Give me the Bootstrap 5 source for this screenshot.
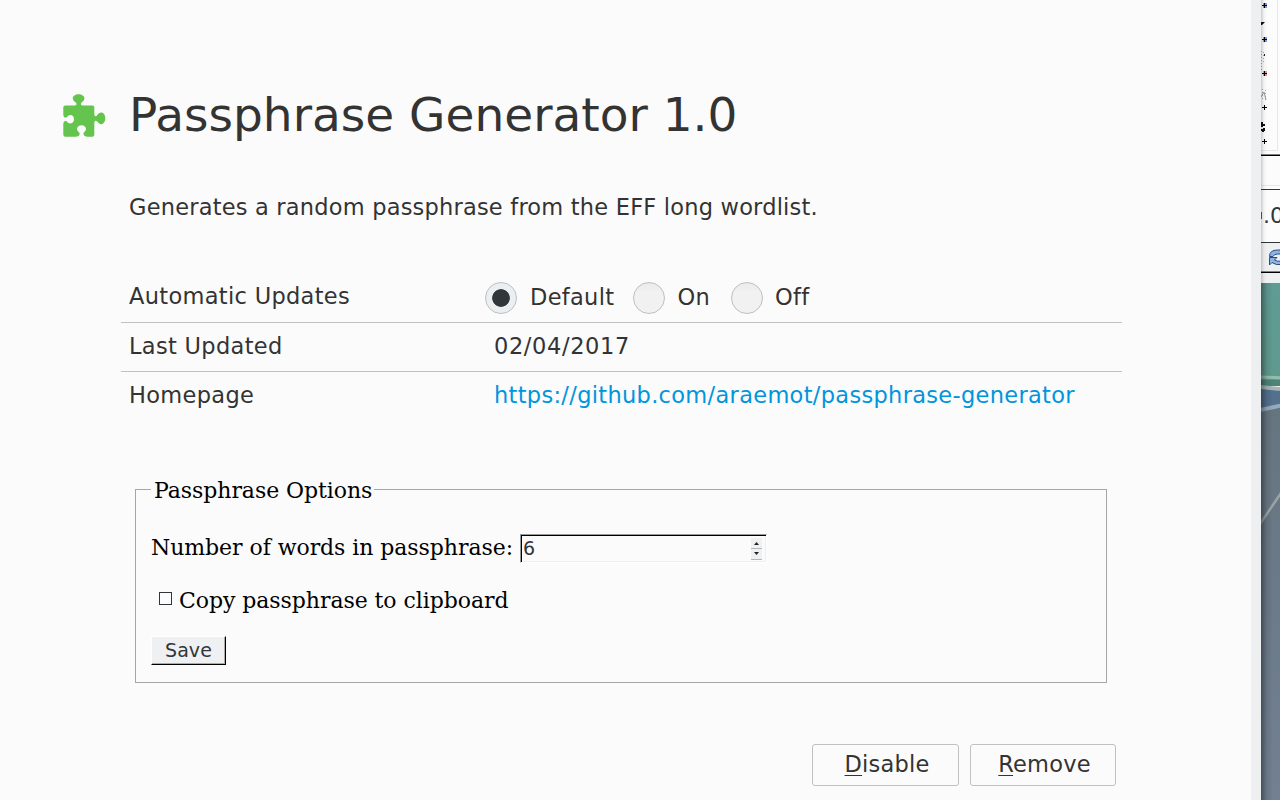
<!DOCTYPE html>
<html lang="en">
<head>
<meta charset="utf-8">
<meta name="viewport" content="width=device-width, initial-scale=1">
<title>Passphrase Generator</title>
<link rel="stylesheet" href="https://cdn.jsdelivr.net/npm/bootstrap@5.3.0/dist/css/bootstrap.min.css">
<style>
body{font-family:"DejaVu Sans",sans-serif;font-size:22.5px;line-height:28px;color:#333;background:#fbfbfb}
.pane{width:1251px;padding:86px 129px 0 63px}
.edge{width:10px;background:#edeff1}
.behind{width:19px}
.title{font-size:47px;line-height:56px;margin:1px 0 0 23px;font-weight:400;white-space:nowrap}
.about{margin:50px 0 0 66px;letter-spacing:.205px}
.details{margin:57px 0 0 58px;width:1001px;letter-spacing:.31px}
.line{border-bottom:1px solid #c1c1c1;padding-left:8px;height:49px}
.line:last-child{border-bottom:0}
.line-updates{height:45px;padding-bottom:4px}
.line-updates .key{width:356px;padding-bottom:5px}
.line-updates label span{padding-bottom:2px}
.line-date{padding-bottom:2px}
.line-home{padding-bottom:4px}
.key{width:365px;flex:none}
.date{letter-spacing:.62px}
.line a{color:#0095dd;text-decoration:none}
.pick{appearance:none;width:32px;height:32px;border:1px solid #bfbfbf;border-radius:50%;margin:0;background:linear-gradient(#ebebeb,#f1f1f1 30%)}
.pick:checked{background:radial-gradient(circle,#31363b 8.4px,#eceff1 9.2px)}
.options{font-family:"DejaVu Serif",serif;color:#000;font-size:22px;line-height:26px;margin:55px 0 0 72px;width:972px;letter-spacing:-.06px}
.options fieldset{border:1px solid #a6a6a6;height:207px;padding:0 15px;box-sizing:border-box}
.options legend{float:none;width:auto;font-size:22px;line-height:23px;padding:3px 2px 0 3px;margin:0}
.number{width:247px;height:29px;margin-left:7px;border:1px solid;border-color:#999 #fff #fff #999;background:#fbfbfb;box-shadow:inset 1px 1px #000,inset -1px -1px #eee;font:19px/27px "DejaVu Sans",sans-serif;color:#31363b;padding:0 4px 0 2px}
.steps{width:11px}
.steps span{height:11px;background:#eff0f1;border-bottom:1px solid #b5b5b5}
.tick{appearance:none;width:13px;height:13px;border:1px solid #31363b;background:#fcfcfc;margin:0 7px 5px 8px}
.save{width:75px;height:29px;border:1px solid;border-color:#fff #000 #000 #fff;background:#eff0f1;box-shadow:inset -1px -1px #aaa;font:19px/25px "DejaVu Sans",sans-serif;letter-spacing:.1px;color:#31363b;padding:0;margin-top:22px}
.act{width:147px;height:42px;border:1px solid #c1c1c1;border-radius:3px;background:#fbfbfb;color:#333;font-size:22.5px;padding:0 0 1px 3px;line-height:37px;letter-spacing:.2px}
.act + .act{width:146px}
.act u{text-underline-offset:3px;text-decoration-thickness:1px}
</style>
</head>
<body class="overflow-hidden">
<div class="d-flex vh-100">
<main class="pane flex-shrink-0">
  <header class="d-flex align-items-start">
    <svg class="flex-shrink-0" width="43" height="56" viewBox="63 86 43 56"><path fill="#64c44d" d="M65.300 105.500H74.500C76.500 105.500 77 104 76 102.700 74.500 101.600 72.800 100.500 72.800 98.500 72.800 96 75.300 94.300 78.600 94.300S84.400 96 84.400 98.500C84.400 100.500 82.700 101.600 81.400 102.700 80.300 104 81 105.500 82.800 105.500H92.500Q94.300 105.500 94.300 107.300V113.500C94.300 116 95.500 116.800 97 115.600 98.200 113.800 99.500 112.500 101.300 112.500 103.600 112.500 105.300 115.200 105.300 118.300S103.600 124.200 101.300 124.200C99.500 124.200 98.200 122.800 97 121.300 95.500 120 94.300 120.800 94.300 123.300V134.700Q94.300 136.700 92.300 136.700H87.500C85 136.700 84 135.700 83.500 134 83.300 132 86 131.400 86 129 86 126.700 84 125.200 81.600 125.200S77 126.700 77 129C77 131.400 79.900 132 79.700 134 79.300 135.700 78 136.700 75.600 136.700H65.300Q63.300 136.700 63.300 134.700V124C63.300 122 64.300 120.800 66 120.900 67.400 121.300 68 123.500 70.300 123.500 72.700 123.500 74 121.500 74 119.300S72.700 115.100 70.300 115.100C68 115.100 67.400 117.300 66 117.700 64.300 117.800 63.300 116.600 63.300 114.500V107.300Q63.300 105.500 65.300 105.500z"/></svg>
    <h1 class="title">Passphrase Generator 1.0</h1>
  </header>
  <p class="about mb-0">Generates a random passphrase from the EFF long wordlist.</p>
  <section class="details">
    <div class="line line-updates d-flex align-items-center">
      <div class="key">Automatic Updates</div>
      <label class="d-flex align-items-center"><input class="pick" type="radio" name="u" checked><span style="margin:0 19px 0 13px">Default</span></label>
      <label class="d-flex align-items-center"><input class="pick" type="radio" name="u"><span style="margin:0 21px 0 12px">On</span></label>
      <label class="d-flex align-items-center"><input class="pick" type="radio" name="u"><span style="margin-left:12px">Off</span></label>
    </div>
    <div class="line line-date d-flex align-items-center"><div class="key">Last Updated</div><div class="date">02/04/2017</div></div>
    <div class="line line-home d-flex align-items-center"><div class="key">Homepage</div><a href="#">https://github.com/araemot/passphrase-generator</a></div>
  </section>
  <form class="options">
    <fieldset>
      <legend>Passphrase Options</legend>
      <div class="d-flex align-items-start" style="margin-top:32px"><label class="pt-1" style="line-height:20px" for="n">Number of words in passphrase:</label>
        <div class="number d-flex justify-content-between align-items-center" id="n"><span>6</span>
          <span class="steps d-flex flex-column"><span class="d-flex justify-content-center align-items-center"><svg class="d-block" width="7" height="4"><path d="M1 4h5L3.500 1z" fill="#222"/></svg></span><span class="d-flex justify-content-center align-items-center"><svg class="d-block" width="7" height="4"><path d="M1 0h5L3.500 3z" fill="#222"/></svg></span></span>
        </div>
      </div>
      <label class="d-flex align-items-center" style="margin-top:25px"><input class="tick" type="checkbox"><span>Copy passphrase to clipboard</span></label>
      <button class="save d-block" type="button">Save</button>
    </fieldset>
  </form>
  <div class="d-flex justify-content-end" style="margin:61px 6px 0 0;gap:11px"><button class="act"><u>D</u>isable</button><button class="act"><u>R</u>emove</button></div>
</main>
<div class="edge flex-shrink-0"></div>
<svg class="behind flex-shrink-0" width="19" height="800" viewBox="1261 0 19 800">
  <defs>
    <linearGradient id="teal" x2="0" y2="1"><stop offset="0" stop-color="#609c94"/><stop offset="1" stop-color="#5f998e"/></linearGradient>
    <linearGradient id="slate" x2="0" y2="1"><stop offset="0" stop-color="#657580"/><stop offset="1" stop-color="#728092"/></linearGradient>
    <linearGradient id="shade"><stop offset="0" stop-color="#000" stop-opacity=".38"/><stop offset=".5" stop-color="#000" stop-opacity=".08"/><stop offset="1" stop-color="#000" stop-opacity="0"/></linearGradient>
  </defs>
  <path fill="#fcfcfc" d="M1261 0h19v800h-19z"/>
  <path stroke="#e6e7e8" fill="none" d="M1277.500 0v150.500H1261M1261 185.500h19"/>
  <path fill="#eff0f1" d="M1261 243h19v28h-19zM1261 273h19v10h-19z"/>
  <path fill="#000" d="M1261 154.500h19v1.500h-19zM1261 271.500h19v1.500h-19z"/>
  <path stroke="#31363b" d="M1261 189.500h19M1261 242.500h19"/>
  <path fill="#8298f2" d="M1263 3h4v5h-4zM1263 37h4v5h-4z"/><path fill="#f09090" d="M1263 71h4v5h-4z"/>
  <path stroke="#000" d="M1262 5.500h5m-2.500-2.500v5M1262 39.500h5m-2.500-2.500v5M1262 73.500h5m-2.500-2.500v5M1262 107.500h5m-2.500-2.500v5M1262 141.500h5m-2.500-2.500v5"/>
  <path fill="#111" d="M1261 22h4l-3 3h-1zM1261 122h2v2h2v2h-2v1h-2zM1261 129h2v-1h2v3h-1v1h-2v-1h-1z"/>
  <path stroke="#aaa" fill="none" stroke-dasharray="1 2" d="M1261.500 51v20M1263.500 52v10M1262.500 89v11M1265.500 90v10"/><path fill="#222" d="M1264 54h1v2h-1z"/>
  <path stroke="#999" fill="none" d="m1261 97 3-5 2 8"/>
  <text x="1263" y="223" font-size="22" fill="#31363b">.0</text><path fill="#555d66" d="M1261 212h1v7h-1z"/>
  <path fill="#8eb5e1" stroke="#254d87" d="M1269.500 256.500q0-6.500 8-6.500h4v4h-4q-3.500 0-4.500 2.500zM1269.500 265v-7.500h7.500l-2.500 2.500q3 2 7 1v3.500q-5.500 1-9.500-2z"/>
  <path fill="url(#teal)" d="M1261 283h19v100h-19z"/><path fill="#4f8378" d="M1261 380h19v6h-19z"/>
  <path fill="#53708d" d="M1261 388h19v25h-19z"/><path fill="url(#slate)" d="m1261 411 19-4v393h-19z"/>
  <path stroke="#91bfae" stroke-width="3" d="m1261 377 19 .7"/><path stroke="#a5b5b7" stroke-width="4" d="m1261 387 19 2"/><path stroke="#96aabd" stroke-width="4" d="m1260 410 21-4.500"/><path stroke="#9aa5aa" stroke-width="2.500" d="m1260 524 21-31"/>
  <path fill="url(#shade)" d="M1261 283h12v517h-12z"/><path fill="url(#shade)" opacity=".5" d="M1261 0h6v283h-6z"/>
</svg>
</div>
<script src="https://cdn.jsdelivr.net/npm/bootstrap@5.3.0/dist/js/bootstrap.bundle.min.js"></script>
</body>
</html>
